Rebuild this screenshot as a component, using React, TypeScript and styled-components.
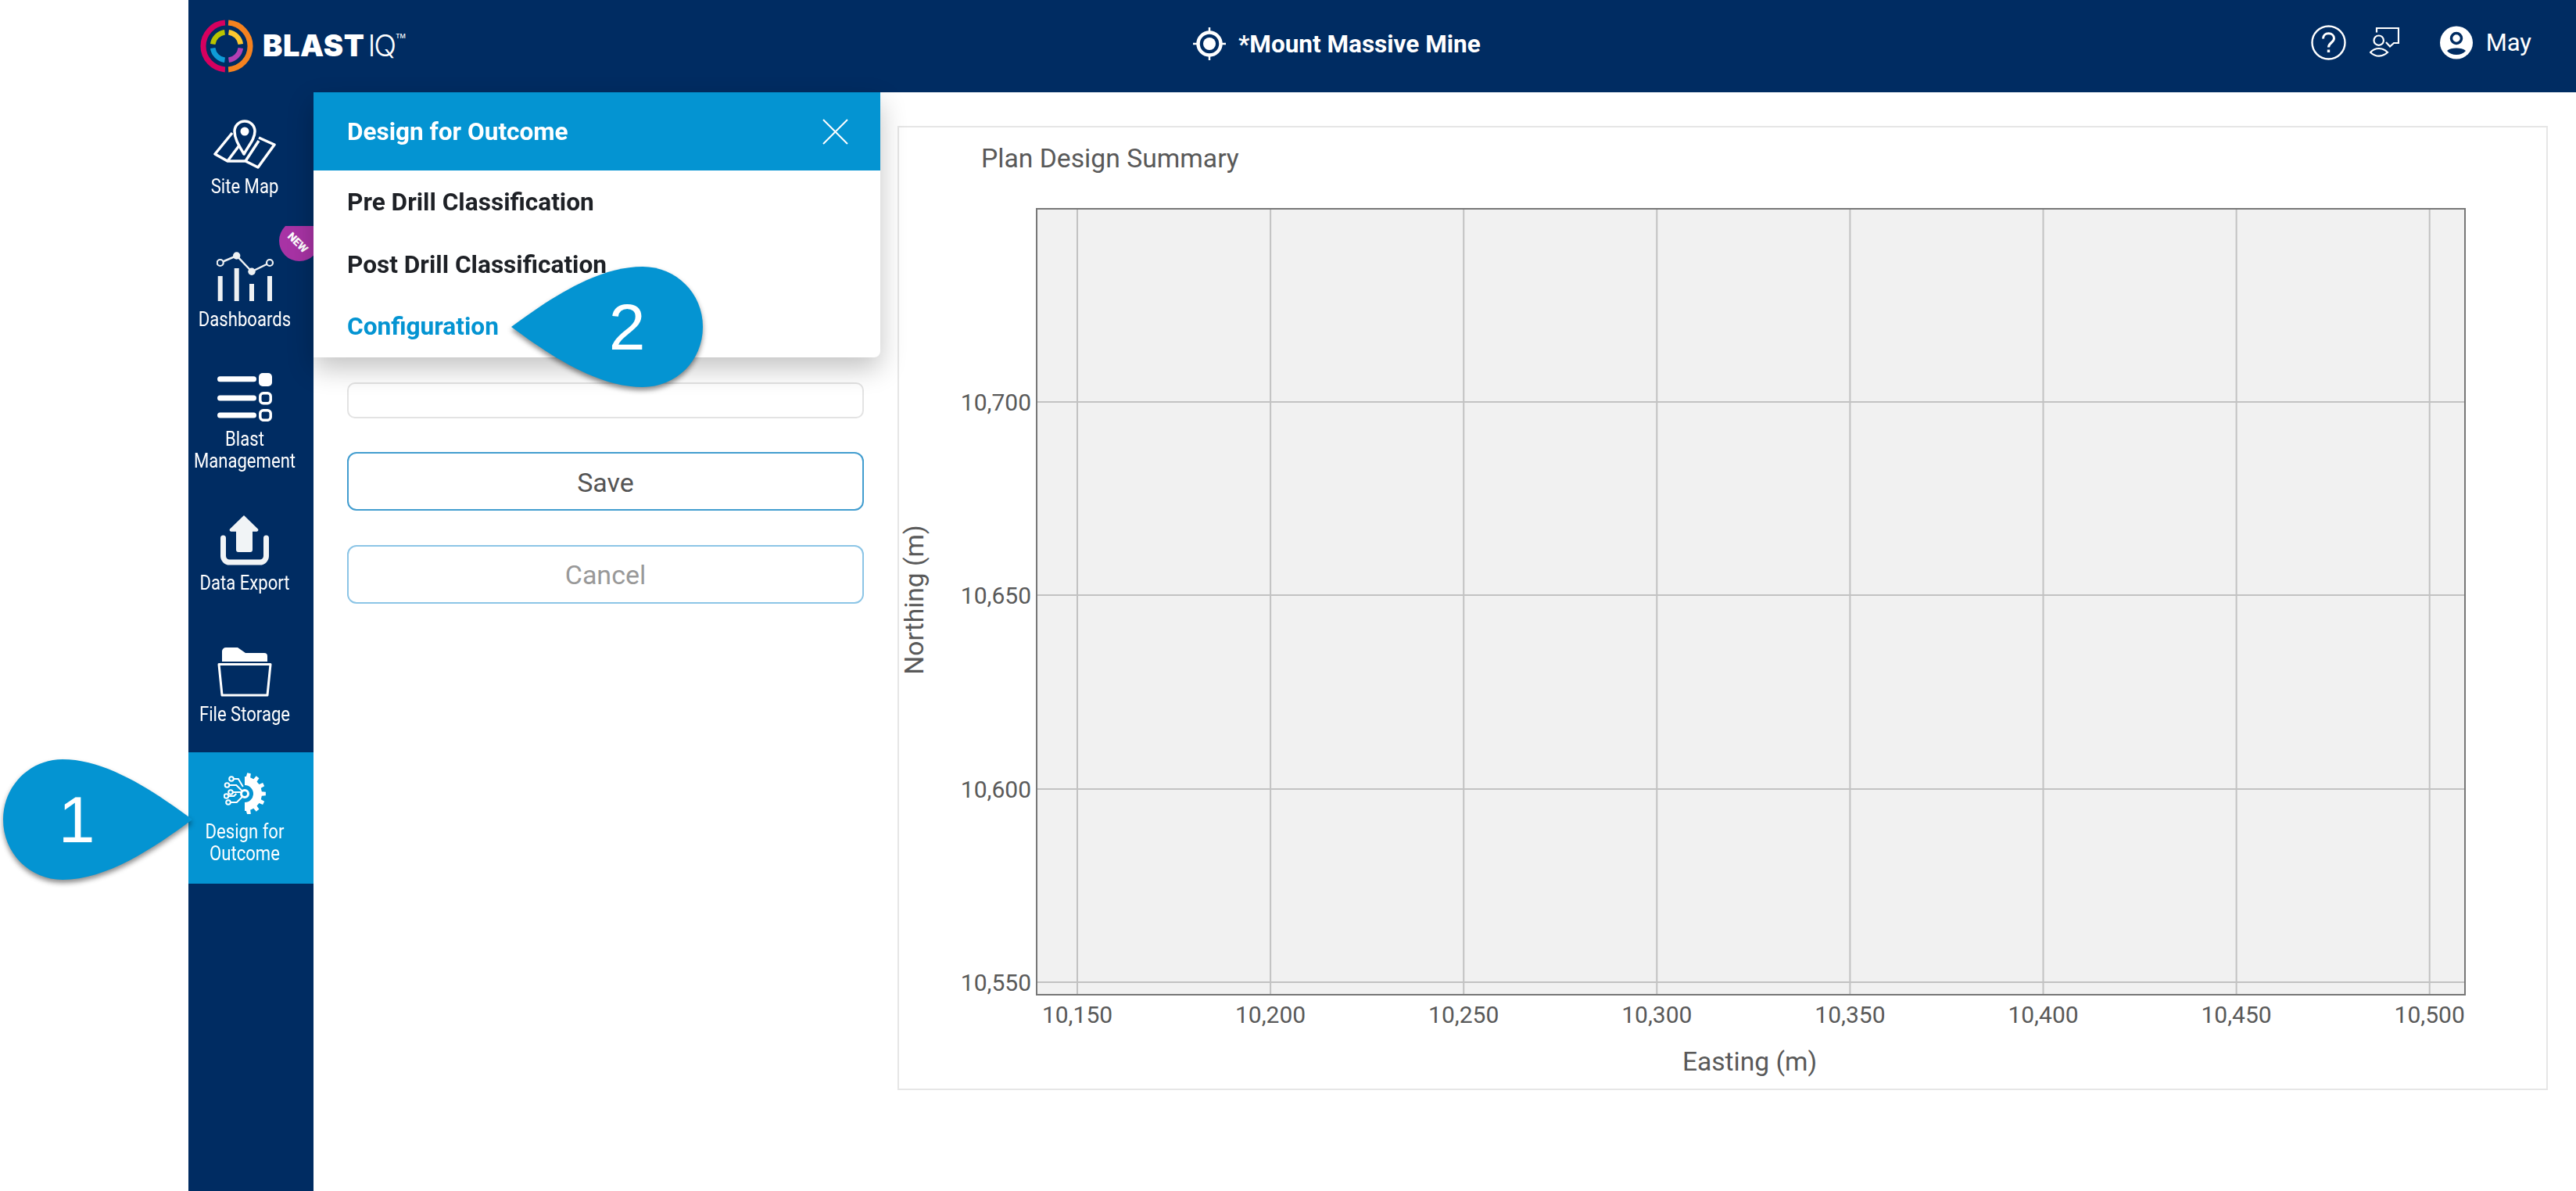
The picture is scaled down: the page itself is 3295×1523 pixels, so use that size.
import styled, { createGlobalStyle } from "styled-components";

const NAVY = "#002c62";
const BLUE = "#0494d2";

const GlobalStyle = createGlobalStyle`
  html, body {
    margin: 0;
    padding: 0;
    background: #fff;
    font-family: Roboto, "Liberation Sans", sans-serif;
  }
`;

const Page = styled.div`
  position: relative;
  width: 3295px;
  height: 1523px;
  padding-left: 241px;
  box-sizing: border-box;
  overflow: hidden;
  display: flex;
  flex-direction: column;
`;

const Header = styled.header`
  flex: none;
  height: 118px;
  padding: 0 57px 0 15px;
  box-sizing: border-box;
  background: ${NAVY};
  color: #fff;
  display: grid;
  grid-template-columns: 1270px 1fr auto;
  align-items: center;
`;

const Logo = styled.div`
  display: flex;
  align-items: center;
  gap: 12px;
`;

const Wordmark = styled.div`
  display: flex;
  align-items: flex-start;
  font-family: Inter, sans-serif;
  font-size: 38px;
  line-height: 38px;
  margin-top: -2px;
`;

const WordBold = styled.span`
  font-weight: 900;
  letter-spacing: 0.6px;
`;

const WordThin = styled.span`
  font-weight: 300;
  margin-left: 4px;
  letter-spacing: -2px;
`;

const WordMark = styled.span`
  font-size: 8px;
  line-height: 14px;
  font-weight: 500;
  margin-left: 1px;
`;

const SiteTitle = styled.div`
  display: flex;
  align-items: center;
  gap: 16px;
  font-size: 31.5px;
  font-weight: 700;
  margin-top: -6px;
`;

const HeaderTools = styled.div`
  display: flex;
  align-items: center;
  margin-top: -10px;
`;

const ToolIcon = styled.svg<{ $gap: number }>`
  display: block;
  margin-right: ${(p) => p.$gap}px;
`;

const UserName = styled.span`
  font-size: 31px;
  margin-left: 17px;
`;

const Body = styled.div`
  flex: 1;
  display: flex;
  min-height: 0;
`;

const Sidebar = styled.nav`
  flex: none;
  width: 160px;
  padding-top: 10px;
  box-sizing: border-box;
  background: ${NAVY};
  display: flex;
  flex-direction: column;
`;

const NavItem = styled.div<{ $height: number; $active?: boolean }>`
  position: relative;
  flex: none;
  height: ${(p) => p.$height}px;
  padding: 25px 16px 0 0;
  box-sizing: border-box;
  display: flex;
  flex-direction: column;
  align-items: center;
  gap: 8px;
  color: #fff;
  background: ${(p) => (p.$active ? BLUE : "transparent")};
`;

const NavLabel = styled.div`
  width: 190px;
  flex: none;
  font-size: 26px;
  line-height: 28px;
  text-align: center;
  white-space: nowrap;
  transform: scaleX(0.85);
`;

const NewBadge = styled.div`
  position: absolute;
  left: 116px;
  top: -8px;
  width: 44px;
  height: 45px;
  overflow: hidden;
  &::before {
    content: "";
    position: absolute;
    left: 0;
    top: -7px;
    width: 52px;
    height: 52px;
    border-radius: 50%;
    background: #a833a5;
  }
`;

const NewText = styled.span`
  position: absolute;
  left: 6px;
  top: 12px;
  width: 36px;
  text-align: center;
  font-size: 14px;
  line-height: 18px;
  font-weight: 900;
  color: #fff;
  transform: rotate(45deg);
`;

const Main = styled.main`
  flex: 1;
  display: flex;
  align-items: flex-start;
`;

const FormPanel = styled.section`
  flex: none;
  width: 747px;
  padding: 371px 0 0 43px;
  box-sizing: border-box;
  display: flex;
  flex-direction: column;
`;

const EmptyInput = styled.div`
  width: 661px;
  height: 46px;
  margin-bottom: 43px;
  box-sizing: border-box;
  border: 2px solid #e3e3e3;
  border-radius: 10px;
  background: #fff;
`;

const FormButton = styled.button<{ $muted?: boolean }>`
  width: 661px;
  height: 75px;
  margin-bottom: 44px;
  padding: ${(p) => (p.$muted ? "0" : "2px 0 0")};
  box-sizing: border-box;
  background: #fff;
  border: 2px solid ${(p) => (p.$muted ? "#8cc5e6" : "#429dcf")};
  border-radius: 12px;
  color: ${(p) => (p.$muted ? "#999" : "#555")};
  font-family: Roboto, sans-serif;
  font-size: 34px;
`;

const ChartCard = styled.section`
  flex: none;
  width: 2111px;
  height: 1233px;
  margin-top: 43px;
  box-sizing: border-box;
  border: 2px solid #e6e6e6;
  display: flex;
  flex-direction: column;
  background: #fff;
`;

const ChartTitle = styled.div`
  flex: none;
  height: 60px;
  padding: 20px 0 0 105px;
  box-sizing: border-box;
  font-size: 33.7px;
  line-height: 40px;
  color: #595959;
`;

const ChartSvg = styled.svg`
  display: block;
  flex: 1;
  width: 100%;
  min-height: 0;
`;

const TickText = styled.text`
  font-family: Roboto, sans-serif;
  font-size: 30px;
  fill: #595959;
`;

const AxisText = styled.text`
  font-family: Roboto, sans-serif;
  font-size: 33.6px;
  fill: #595959;
`;

const Popover = styled.div`
  position: absolute;
  left: 401px;
  top: 118px;
  width: 725px;
  height: 339px;
  background: #fff;
  border-radius: 0 0 8px 0;
  box-shadow: 0 14px 34px rgba(0, 0, 0, 0.24);
  display: flex;
  flex-direction: column;
`;

const PopoverHead = styled.div`
  flex: none;
  height: 100px;
  padding: 0 41px 0 43px;
  box-sizing: border-box;
  background: ${BLUE};
  color: #fff;
  display: flex;
  align-items: center;
  justify-content: space-between;
`;

const PopoverTitle = styled.div`
  font-size: 32px;
  font-weight: 700;
  transform: scaleX(0.985);
  transform-origin: left center;
`;

const PopoverList = styled.ul`
  margin: 0;
  padding: 0 0 0 43px;
  list-style: none;
`;

const PopoverRow = styled.li<{ $current?: boolean }>`
  height: 79.5px;
  padding-top: 1px;
  box-sizing: border-box;
  display: flex;
  align-items: center;
  font-size: 32px;
  font-weight: 700;
  color: ${(p) => (p.$current ? BLUE : "#1e2126")};
`;

const RowText = styled.span`
  transform: scaleX(0.988);
  transform-origin: left center;
`;

const Callout = styled.div<{ $left: number; $top: number; $width: number }>`
  position: absolute;
  left: ${(p) => p.$left}px;
  top: ${(p) => p.$top}px;
  width: ${(p) => p.$width}px;
  height: 154px;
  filter: drop-shadow(0 4px 3px rgba(0, 0, 0, 0.45));
`;

const CalloutShape = styled.svg`
  display: block;
`;

const CalloutNumber = styled.span<{ $center: number }>`
  position: absolute;
  left: ${(p) => p.$center - 40}px;
  top: 27px;
  width: 80px;
  text-align: center;
  color: #fff;
  font-family: "Liberation Sans", Arial, sans-serif;
  font-size: 84px;
  line-height: 100px;
`;

// ring arc between two angles, 0 is up and angles run clockwise
function arc(r: number, from: number, to: number) {
  const pt = (a: number) => {
    const t = ((a - 90) * Math.PI) / 180;
    return `${(r * Math.cos(t)).toFixed(2)} ${(r * Math.sin(t)).toFixed(2)}`;
  };
  return `M${pt(from)} A${r} ${r} 0 ${to - from > 180 ? 1 : 0} 1 ${pt(to)}`;
}

function gearPath() {
  const cx = 27;
  const cy = 28;
  const pts: string[] = [];
  const polar = (r: number, deg: number) => {
    const t = (deg * Math.PI) / 180;
    return `${(cx + r * Math.cos(t)).toFixed(2)} ${(cy + r * Math.sin(t)).toFixed(2)}`;
  };
  pts.push(`M${polar(11, -90)}`, `L${polar(22, -90)}`);
  for (let i = 0; i < 7; i++) {
    const mid = -90 + 12 + i * 26;
    pts.push(
      `L${polar(22, mid - 7)}`,
      `L${polar(27, mid - 5)}`,
      `L${polar(27, mid + 5)}`,
      `L${polar(22, mid + 7)}`
    );
  }
  pts.push(`L${polar(22, 90)}`, `L${polar(11, 90)}`, `A11 11 0 0 0 ${polar(11, -90)}`, "Z");
  return pts.join(" ");
}

const LogoMark = () => (
  <svg width="68" height="68" viewBox="-34 -34 68 68">
    <g fill="none" strokeWidth="7">
      <path d={arc(30, 184, 356)} stroke="#d6005f" />
      <path d={arc(30, 4, 176)} stroke="#f5821f" />
    </g>
    <g fill="none" strokeWidth="6.5">
      <path d={arc(18, 278, 352)} stroke="#b9c400" />
      <path d={arc(18, 8, 82)} stroke="#fdc82f" />
      <path d={arc(18, 188, 262)} stroke="#0f9bd7" />
      <path d={arc(18, 98, 172)} stroke="#b33fb3" />
    </g>
  </svg>
);

const TargetIcon = () => (
  <svg width="42" height="42" viewBox="0 0 42 42" fill="none" stroke="#fff">
    <circle cx="21" cy="21" r="14.5" strokeWidth="4.5" />
    <circle cx="21" cy="21" r="8" fill="#fff" stroke="none" />
    <path d="M21 0v6M21 36v6M0 21h6M36 21h6" strokeWidth="2.5" />
  </svg>
);

const HelpIcon = () => (
  <ToolIcon $gap={30} width="45" height="45" viewBox="0 0 45 45" fill="none" stroke="#fff">
    <circle cx="22.5" cy="22.5" r="21" strokeWidth="2.4" />
    <path d="M15.5 17.5c0-4.2 3-6.7 7-6.7s7 2.5 7 6.2c0 5.5-7 5.5-7 11.5" strokeWidth="3" />
    <path d="M22.5 31.5v3.5" strokeWidth="3.4" />
  </ToolIcon>
);

const FeedbackIcon = () => (
  <ToolIcon $gap={52} width="38" height="38" viewBox="0 0 38 38" fill="none" stroke="#fff" strokeWidth="2.2">
    <path d="M9 6.5V1h28v19h-6l-5 4.5-5-5.5" />
    <circle cx="11.7" cy="16.7" r="6.2" />
    <path d="M1 32c4-4.500 7-5 11-5s7 .5 11 5c-4 3.500-7 4.700-11 4.700S5 35.500 1 32z" />
  </ToolIcon>
);

const UserIcon = () => (
  <svg width="42" height="43" viewBox="0 0 42 43">
    <circle cx="21" cy="21.5" r="21" fill="#fff" />
    <circle cx="21" cy="16" r="6.500" fill="#fff" stroke={NAVY} strokeWidth="3.500" />
    <path d="M9 32c3-3 7-3.500 12-3.500S30 29 33 32c-3 3.500-7 5-12 5S12 35.500 9 32z" fill={NAVY} />
  </svg>
);

const SiteMapIcon = () => (
  <svg width="80" height="63" viewBox="0 0 80 63" fill="none" stroke="#fff" strokeWidth="3.5" strokeLinejoin="round">
    <path d="M24 17 2 44l16 9h23l16 8 21-29-20-9" />
    <path d="M18 53 33 33M41 53 58 27" />
    <path d="M39 44C32 32 27 24 27 15a13 13 0 0 1 26 0c0 9-7 17-14 29z" fill={NAVY} />
    <circle cx="40" cy="15" r="5.500" fill="#fff" stroke="none" />
  </svg>
);

const DashboardsIcon = () => (
  <svg width="73" height="64" viewBox="0 0 73 64" fill="none" stroke="#eef1f3">
    <path d="M4.700 63V31M25.700 63V21M45 63V41M68 63V31" strokeWidth="6" />
    <path d="M4.700 14 25.700 5 45 25.300 68 14" strokeWidth="2.500" />
    <circle cx="4.700" cy="14" r="4" strokeWidth="2.200" fill={NAVY} />
    <circle cx="25.700" cy="5" r="4.700" fill="#eef1f3" stroke="none" />
    <circle cx="45" cy="25.300" r="4.700" fill="#eef1f3" stroke="none" />
    <circle cx="68" cy="14" r="4" strokeWidth="2.200" fill={NAVY} />
  </svg>
);

const BlastIcon = () => (
  <svg width="70" height="62" viewBox="0 0 70 62" fill="none" stroke="#fff">
    <path d="M3.500 7.700H46.500M3.500 32H46.500M3.500 54H46.500" strokeWidth="7" strokeLinecap="round" />
    <rect x="53" y="0" width="17" height="17" rx="5" fill="#fff" stroke="none" />
    <rect x="54.800" y="25.800" width="13.400" height="13" rx="4" strokeWidth="3.500" />
    <rect x="54.800" y="47.800" width="13.400" height="12.500" rx="4" strokeWidth="3.500" />
  </svg>
);

const ExportIcon = () => (
  <svg width="62" height="64" viewBox="0 0 62 64" fill="#f1f4f6">
    <path d="M30 0 48 17.500a2 2 0 0 1-1.500 3.200H41V44a3 3 0 0 1-3 3H23a3 3 0 0 1-3-3V20.700h-6.500A2 2 0 0 1 12 17.500z" />
    <path d="M3.500 29v23a8 8 0 0 0 8 8h39a8 8 0 0 0 8-8V29" fill="none" stroke="#f1f4f6" strokeWidth="7" strokeLinecap="round" />
  </svg>
);

const FolderIcon = () => (
  <svg width="70" height="63" viewBox="0 0 70 63">
    <path d="M6 18V5a5 5 0 0 1 5-5h15l10 7h24a4 4 0 0 1 4 4v7z" fill="#fff" />
    <path d="M2 21.500h66l-4 39.500H6z" fill="none" stroke="#fff" strokeWidth="3" strokeLinejoin="round" />
  </svg>
);

const GearIcon = () => (
  <svg width="54" height="54" viewBox="0 0 54 54" fill="none" stroke="#fff" strokeWidth="2">
    <path d={gearPath()} fill="#fff" stroke="none" />
    <circle cx="27" cy="28" r="4.500" strokeWidth="3" />
    <circle cx="10" cy="9" r="2.800" />
    <circle cx="4.500" cy="17" r="2.800" />
    <circle cx="9" cy="26" r="2.800" />
    <circle cx="3.500" cy="31" r="2.800" />
    <circle cx="6" cy="39" r="2.800" />
    <path d="M12.800 9h6l6 10M7.300 17h9l7 7M11.800 26h11M6.300 31h7l3-3M8.800 39h8l7-7" />
  </svg>
);

const CloseIcon = () => (
  <svg width="33" height="33" viewBox="0 0 33 33" stroke="#fff" strokeWidth="2">
    <path d="M1 1 32 32M32 1 1 32" />
  </svg>
);

const xTicks = ["10,150", "10,200", "10,250", "10,300", "10,350", "10,400", "10,450", "10,500"];
const yTicks = [
  { label: "10,700", y: 514 },
  { label: "10,650", y: 761 },
  { label: "10,600", y: 1009 },
  { label: "10,550", y: 1256 },
];

const PlanChart = () => (
  <ChartSvg viewBox="1150 223 2107 1169" preserveAspectRatio="none">
    <rect x="1326" y="267" width="1827" height="1005" fill="#f1f1f1" />
    {xTicks.map((t, i) => (
      <line key={t} x1={1378 + i * 247.1} x2={1378 + i * 247.1} y1="267" y2="1272" stroke="#c2c2c2" strokeWidth="2" />
    ))}
    {yTicks.map((t) => (
      <line key={t.label} x1="1326" x2="3153" y1={t.y} y2={t.y} stroke="#c2c2c2" strokeWidth="2" />
    ))}
    <rect x="1326" y="267" width="1827" height="1005" fill="none" stroke="#777" strokeWidth="2" />
    {xTicks.map((t, i) => (
      <TickText key={t} x={1378 + i * 247.1} y="1308" textAnchor="middle">
        {t}
      </TickText>
    ))}
    {yTicks.map((t) => (
      <TickText key={t.label} x="1319" y={t.y + 11} textAnchor="end">
        {t.label}
      </TickText>
    ))}
    <AxisText x="2238" y="1369" textAnchor="middle">
      Easting (m)
    </AxisText>
    <AxisText x="1181" y="767" textAnchor="middle" transform="rotate(-90 1181 767)">
      Northing (m)
    </AxisText>
  </ChartSvg>
);

export default function App() {
  return (
    <>
      <GlobalStyle />
      <Page>
        <Header>
          <Logo>
            <LogoMark />
            <Wordmark>
              <WordBold>BLAST</WordBold>
              <WordThin>IQ</WordThin>
              <WordMark>TM</WordMark>
            </Wordmark>
          </Logo>
          <SiteTitle>
            <TargetIcon />
            *Mount Massive Mine
          </SiteTitle>
          <HeaderTools>
            <HelpIcon />
            <FeedbackIcon />
            <UserIcon />
            <UserName>May</UserName>
          </HeaderTools>
        </Header>
        <Body>
          <Sidebar>
            <NavItem $height={169}>
              <SiteMapIcon />
              <NavLabel>Site Map</NavLabel>
            </NavItem>
            <NavItem $height={155}>
              <NewBadge>
                <NewText>NEW</NewText>
              </NewBadge>
              <DashboardsIcon />
              <NavLabel>Dashboards</NavLabel>
            </NavItem>
            <NavItem $height={182}>
              <BlastIcon />
              <NavLabel>
                Blast
                <br />
                Management
              </NavLabel>
            </NavItem>
            <NavItem $height={169}>
              <ExportIcon />
              <NavLabel>Data Export</NavLabel>
            </NavItem>
            <NavItem $height={159}>
              <FolderIcon />
              <NavLabel>File Storage</NavLabel>
            </NavItem>
            <NavItem $height={168} $active>
              <GearIcon />
              <NavLabel>
                Design for
                <br />
                Outcome
              </NavLabel>
            </NavItem>
          </Sidebar>
          <Main>
            <FormPanel>
              <EmptyInput />
              <FormButton>Save</FormButton>
              <FormButton $muted>Cancel</FormButton>
            </FormPanel>
            <ChartCard>
              <ChartTitle>Plan Design Summary</ChartTitle>
              <PlanChart />
            </ChartCard>
          </Main>
        </Body>
        <Popover>
          <PopoverHead>
            <PopoverTitle>Design for Outcome</PopoverTitle>
            <CloseIcon />
          </PopoverHead>
          <PopoverList>
            <PopoverRow>
              <RowText>Pre Drill Classification</RowText>
            </PopoverRow>
            <PopoverRow>
              <RowText>Post Drill Classification</RowText>
            </PopoverRow>
            <PopoverRow $current>
              <RowText>Configuration</RowText>
            </PopoverRow>
          </PopoverList>
        </Popover>
        <Callout $left={4} $top={971} $width={242}>
          <CalloutShape width="242" height="154" viewBox="0 0 242 154" fill={BLUE}>
            <path d="M242 77C192 114 132 154 76 154 34 154 0 120 0 77S34 0 76 0c56 0 116 40 166 77z" />
          </CalloutShape>
          <CalloutNumber $center={94}>1</CalloutNumber>
        </Callout>
        <Callout $left={654} $top={341} $width={245}>
          <CalloutShape width="245" height="154" viewBox="0 0 245 154" fill={BLUE}>
            <path d="M0 77C50 40 110 0 168 0c43 0 77 34 77 77s-34 77-77 77C110 154 50 114 0 77z" />
          </CalloutShape>
          <CalloutNumber $center={148}>2</CalloutNumber>
        </Callout>
      </Page>
    </>
  );
}
